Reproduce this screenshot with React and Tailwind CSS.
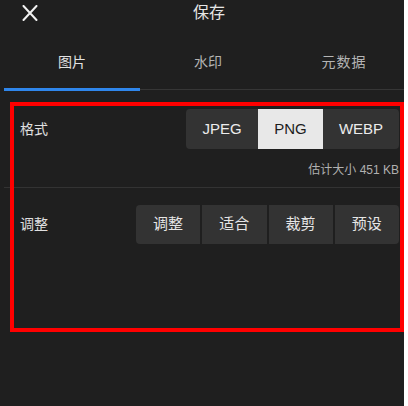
import React from "react";

const font = { fontFamily: '"Liberation Sans", "Noto Sans CJK SC", sans-serif' };

export default function App() {
  return (
    <div className="w-[408px] h-[406px] bg-white flex" style={font}>
      <div className="relative w-[404px] h-[406px] bg-[#1f1f1f] flex flex-col overflow-hidden">
        {/* header */}
        <div className="h-[40px] flex items-start pl-[22px]">
          <svg width="16" height="16" viewBox="0 0 16 16" className="mt-[5px]">
            <path d="M1.5 1 L14.5 15 M14.5 1 L1.5 15" stroke="#f2f2f2" strokeWidth="2" strokeLinecap="round" fill="none" />
          </svg>
          <div className="ml-[155px] pt-[3px] text-[16px] leading-[20px] text-[#e6e6e6]">保存</div>
        </div>
        {/* tabs */}
        <div className="h-[48px] flex pl-[4px] pt-[12px] w-[420px]">
          <div className="w-[136px] shrink-0 text-center text-[14px] leading-[20px] text-[#e2e2e2]">图片</div>
          <div className="w-[136px] shrink-0 text-center text-[14px] leading-[20px] text-[#b4b4b4]">水印</div>
          <div className="w-[136px] shrink-0 text-center text-[14px] leading-[20px] text-[#b4b4b4] tracking-[1px]">元数据</div>
        </div>
        <div className="relative h-[3px] ml-[4px]">
          <div className="absolute left-0 right-0 top-[1px] h-[1px] bg-[#363636]" />
          <div className="absolute left-0 top-0 w-[136px] h-[3px] bg-[#2f86eb]" />
        </div>
        {/* content */}
        <div className="flex flex-col">
          <div className="flex items-center justify-between pl-[20px] pr-[5px] mt-[18px]">
            <div className="text-[14px] text-[#e0e0e0]">格式</div>
            <div className="flex h-[40px] rounded-[4px] overflow-hidden">
              <div className="w-[72px] flex items-center justify-center bg-[#333333] text-[15px] text-[#ececec]">JPEG</div>
              <div className="w-[65px] flex items-center justify-center bg-[#e8e8e8] text-[15px] text-[#1c1c1c]">PNG</div>
              <div className="w-[76px] flex items-center justify-center bg-[#333333] text-[15px] text-[#ececec]">WEBP</div>
            </div>
          </div>
          <div className="pr-[5px] mt-[13px] text-right text-[12px] leading-[16px] text-[#b0b0b0]">估计大小 451 KB</div>
          <div className="ml-[4px] mt-[9px] h-[1px] bg-[#333333]" />
          <div className="flex items-center justify-between pl-[20px] pr-[5px] mt-[17px]">
            <div className="text-[14px] text-[#e0e0e0]">调整</div>
            <div className="flex w-[263px] h-[39px] rounded-[4px] overflow-hidden gap-[2px]">
              {["调整", "适合", "裁剪", "预设"].map((t) => (
                <div key={t} className="flex-1 flex items-center justify-center bg-[#333333] text-[15px] text-[#e6e6e6]">{t}</div>
              ))}
            </div>
          </div>
        </div>
        {/* annotation overlay */}
        <div className="absolute left-[10px] top-[102px] w-[394px] h-[230px] border-[4px] border-[#ff0000]" />
      </div>
    </div>
  );
}
